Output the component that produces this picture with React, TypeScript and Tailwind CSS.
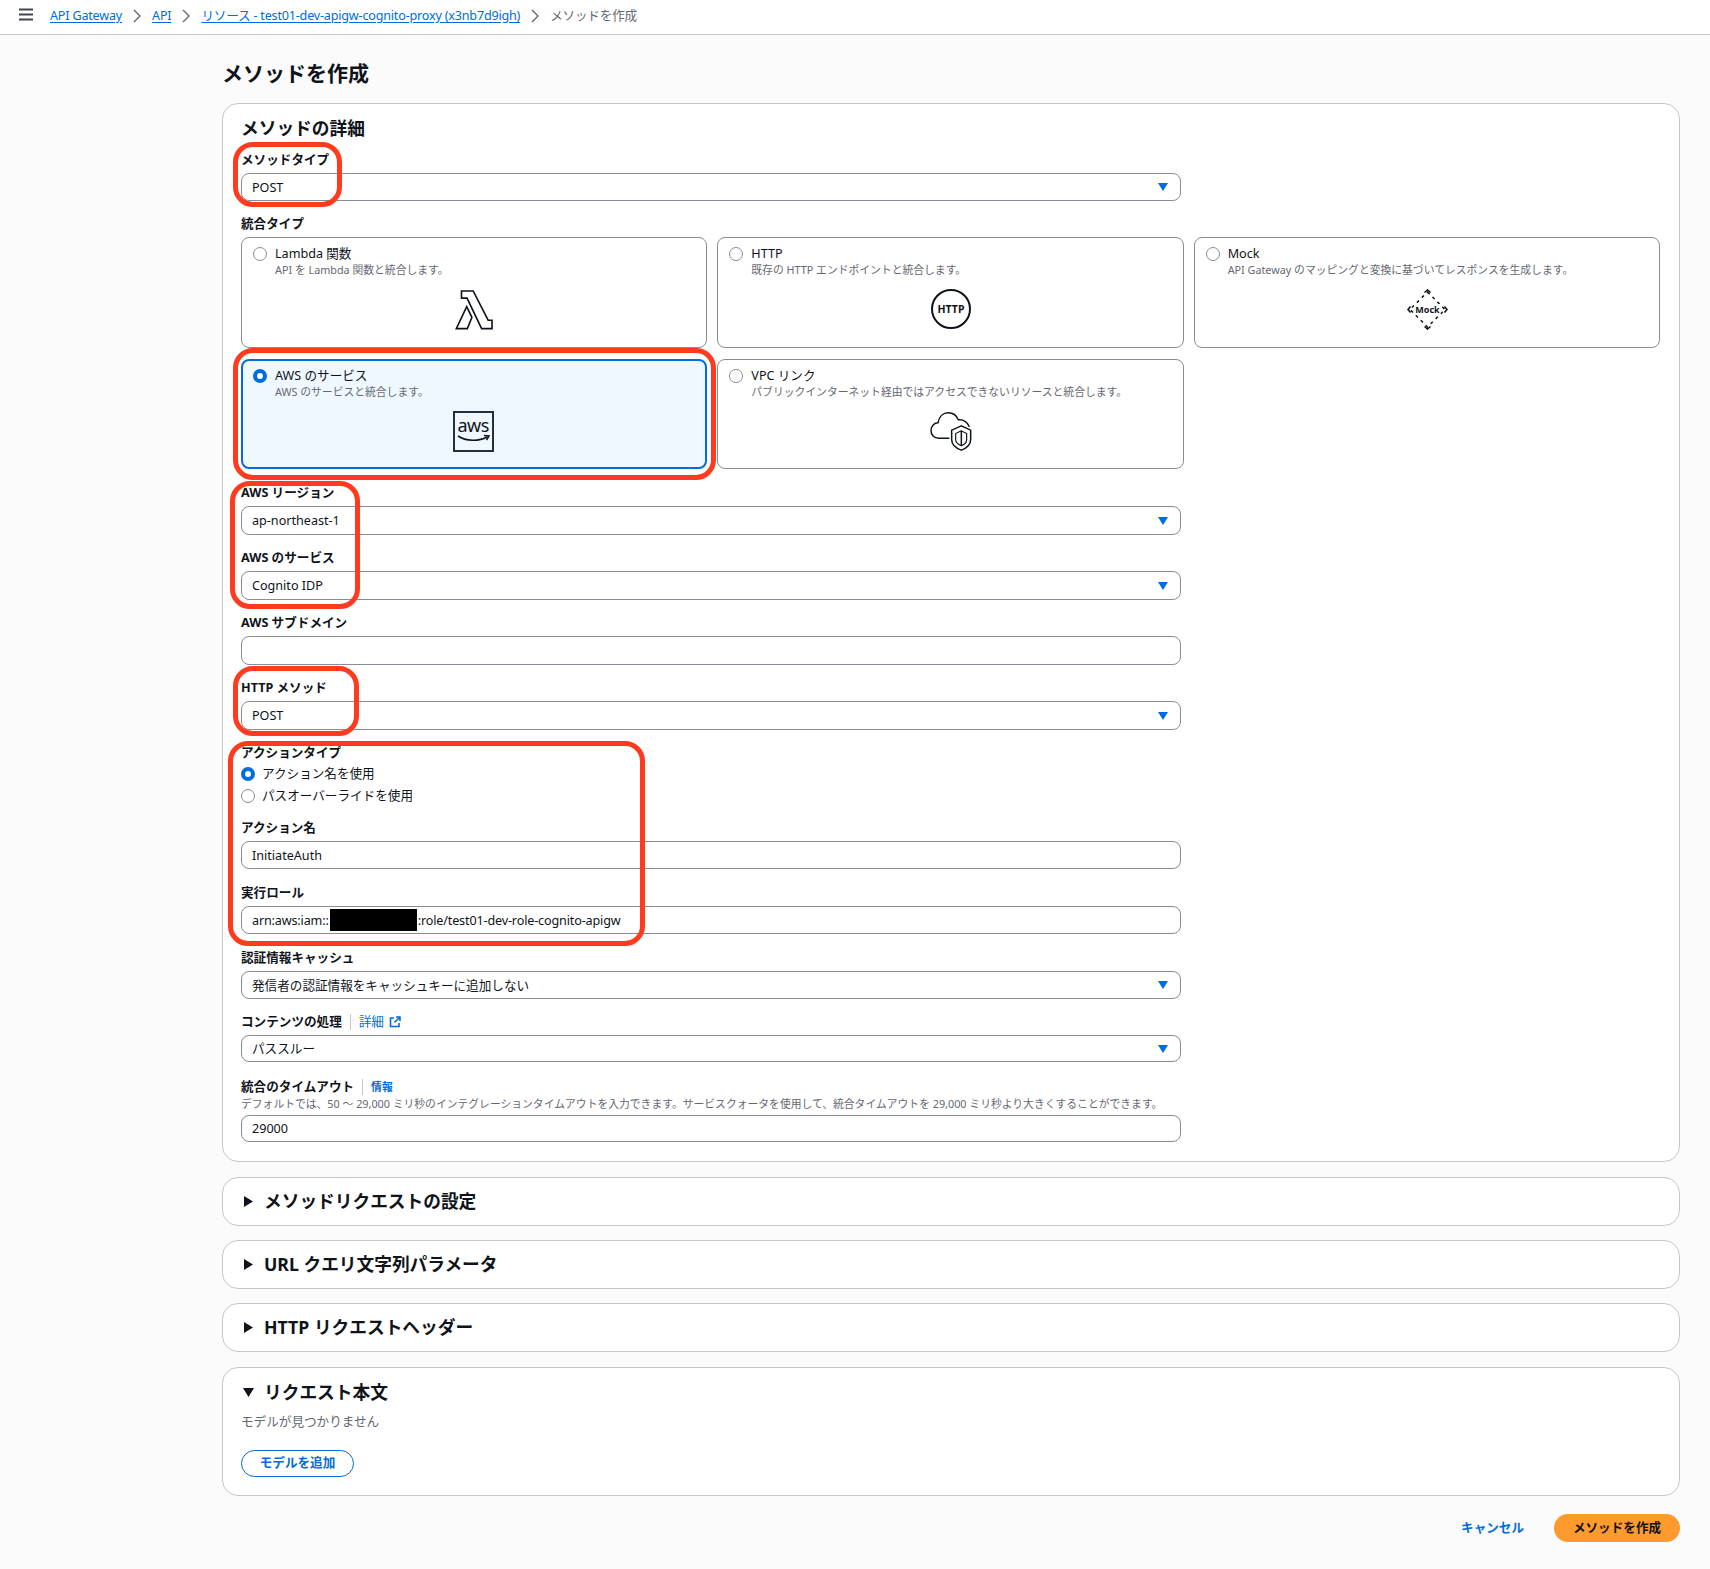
import type { ReactNode } from "react";

const Caret = () => (
  <svg width="10" height="8" viewBox="0 0 10 8" className="shrink-0">
    <polygon points="0,0 10,0 5,8" fill="#006ce0" />
  </svg>
);

const Chevron = () => (
  <svg width="8" height="14" viewBox="0 0 8 14" className="mx-[11px] shrink-0">
    <path d="M1 1l6 6-6 6" fill="none" stroke="#656871" strokeWidth="1.4" />
  </svg>
);

function Radio({ checked = false }: { checked?: boolean }) {
  return checked ? (
    <span className="box-border block h-[14px] w-[14px] shrink-0 rounded-full border-[4px] border-[#006ce0] bg-white" />
  ) : (
    <span className="box-border block h-[14px] w-[14px] shrink-0 rounded-full border border-[#8c8c94] bg-white" />
  );
}

function Label({ children }: { children: ReactNode }) {
  return <div className="h-[22px] text-[12.6px] leading-[23px] font-bold text-[#0f141a]">{children}</div>;
}

function Field({
  label,
  value,
  className,
  height,
  select = false,
}: {
  label?: ReactNode;
  value: ReactNode;
  className: string;
  height: string;
  select?: boolean;
}) {
  return (
    <div className={className}>
      {label && <div className="mb-[3px]"><Label>{label}</Label></div>}
      <div
        className={`${height} flex w-[940px] items-center justify-between rounded-lg border border-[#8c8c94] bg-white pr-[12px] pl-[10px] text-[12.6px] text-[#0f141a]`}
      >
        <span className="flex items-center pt-[2px]">{value}</span>
        {select && <Caret />}
      </div>
    </div>
  );
}

function LambdaIcon() {
  return (
    <svg width="38" height="41" viewBox="703 206 117 124" className="ml-[-2px]">
      <path d="M723 211H759L805 301H817V327H785L740 233H723Z" fill="none" stroke="#0f141a" strokeWidth="5" strokeLinejoin="miter" />
      <path d="M739 259L707 327H741L755 292Z" fill="none" stroke="#0f141a" strokeWidth="5" />
    </svg>
  );
}

function AwsIcon() {
  return (
    <div className="ml-[-2px] box-border flex h-[41px] w-[41px] flex-col items-center border-2 border-[#232f3e] bg-transparent">
      <span className="mt-[2px] h-[20px] text-[18px] leading-[20px] tracking-[-0.5px] text-[#0f141a]">aws</span>
      <svg width="33" height="9" viewBox="0 0 33 9" className="mt-[-1px]">
        <path d="M1 2C9 7.5 22 7.5 30 3" fill="none" stroke="#0f141a" strokeWidth="1.7" />
        <path d="M27 1.5L32 2L29.5 6" fill="none" stroke="#0f141a" strokeWidth="1.5" />
      </svg>
    </div>
  );
}

function HttpIcon() {
  return (
    <div className="box-border flex h-[40px] w-[40px] items-center justify-center rounded-full border-2 border-[#0f141a] pt-[1px] text-[10.5px] font-bold text-[#0f141a]">
      HTTP
    </div>
  );
}

function MockIcon() {
  return (
    <svg width="41" height="41" viewBox="0 0 41 41">
      <path d="M20.5 3L38 20.5L20.5 38L3 20.5Z" fill="none" stroke="#0f141a" strokeWidth="1.5" strokeDasharray="3 4" />
      <path d="M17.5 3.5L20.5 1L23.5 3.5M17.5 37.5L20.5 40L23.5 37.5M3.5 17.5L1 20.5L3.5 23.5M37.5 17.5L40 20.5L37.5 23.5" fill="none" stroke="#0f141a" strokeWidth="1.6" />
      <rect x="7.5" y="15" width="26" height="11" fill="#fff" />
      <text x="20.5" y="24" textAnchor="middle" fontSize="9" fontWeight="700" fill="#0f141a">
        Mock
      </text>
    </svg>
  );
}

function VpcIcon() {
  return (
    <svg width="42" height="41" viewBox="690 574 126 120">
      <path
        d="M748 654H716C702 654 693 644 693 631C693 617 703 608 714 608C717 590 729 578 745 578C759 578 770 587 775 599C790 597 803 606 808 620"
        fill="none"
        stroke="#0f141a"
        strokeWidth="4.5"
      />
      <path d="M784 617L755 630V658C755 672 768 684 784 690C800 684 812 672 812 658V630Z" fill="#fff" stroke="#0f141a" strokeWidth="4.5" />
      <path d="M784 632L767 640V658C767 666 775 673 784 677C793 673 800 666 800 658V640Z" fill="none" stroke="#0f141a" strokeWidth="3.5" />
      <path d="M784 632V677" stroke="#0f141a" strokeWidth="4.5" />
    </svg>
  );
}

const integrations = [
  { title: "Lambda 関数", desc: "API を Lambda 関数と統合します。", icon: <LambdaIcon /> },
  { title: "HTTP", desc: "既存の HTTP エンドポイントと統合します。", icon: <HttpIcon /> },
  { title: "Mock", desc: "API Gateway のマッピングと変換に基づいてレスポンスを生成します。", icon: <MockIcon /> },
  { title: "AWS のサービス", desc: "AWS のサービスと統合します。", icon: <AwsIcon />, selected: true },
  { title: "VPC リンク", desc: "パブリックインターネット経由ではアクセスできないリソースと統合します。", icon: <VpcIcon /> },
];

function Collapsed({ title, className }: { title: string; className: string }) {
  return (
    <div className={`${className} flex h-[49px] items-center rounded-2xl border border-[#c6c6cd] bg-white pl-[21px]`}>
      <svg width="9" height="11" viewBox="0 0 9 11" className="mr-[11px]">
        <polygon points="0,0 9,5.5 0,11" fill="#0f141a" />
      </svg>
      <span className="text-[17.7px] font-bold text-[#0f141a]">{title}</span>
    </div>
  );
}

export default function App() {
  return (
    <div className="relative h-[1569px] w-[1710px] overflow-hidden bg-[#fbfbfb] [font-family:'Noto_Sans','Noto_Sans_CJK_JP',sans-serif]">
      <header className="flex h-[35px] items-center border-b border-[#c6c6cd] bg-white pb-[5px] pl-[19px] text-[12.6px] tracking-[-0.2px]">
        <svg width="14" height="13" viewBox="0 0 14 13" className="mr-[17px]">
          <path d="M0 1.5H14M0 6.5H14M0 11.5H14" stroke="#424650" strokeWidth="1.8" />
        </svg>
        <div className="flex items-center pt-[3px]">
          <a className="text-[#006ce0] underline underline-offset-2">API Gateway</a>
          <Chevron />
          <a className="text-[#006ce0] underline underline-offset-2">API</a>
          <Chevron />
          <a className="text-[#006ce0] underline underline-offset-2">リソース - test01-dev-apigw-cognito-proxy (x3nb7d9igh)</a>
          <Chevron />
          <span className="text-[#656871]">メソッドを作成</span>
        </div>
      </header>

      <main className="ml-[222px] w-[1458px]">
        <h1 className="mt-[21px] h-[34px] text-[21px] leading-[34px] font-bold text-[#0f141a]">メソッドを作成</h1>

        <section className="mt-[13px] h-[1059px] rounded-2xl border border-[#c6c6cd] bg-white px-[18px] pt-[10px]">
          <h2 className="h-[28px] text-[17.7px] leading-[28px] font-bold text-[#0f141a]">メソッドの詳細</h2>

          <Field className="mt-[6px]" height="h-[28px]" label="メソッドタイプ" value="POST" select />

          <div className="mt-[11px] mb-[3px]">
            <Label>統合タイプ</Label>
          </div>
          <div className="grid w-[1419px] grid-cols-3 grid-rows-[111px_110px] gap-x-[10px] gap-y-[11px]">
            {integrations.map((item) => (
              <div
                key={item.title}
                className={
                  item.selected
                    ? "box-border h-full rounded-lg border-2 border-[#006ce0] bg-[#f0f8ff] pt-[8px] pl-[10px]"
                    : "box-border h-full rounded-lg border border-[#8c8c94] bg-white pt-[9px] pl-[11px]"
                }
              >
                <div className="flex items-start gap-[8px]">
                  <Radio checked={item.selected} />
                  <div>
                    <div className="text-[12.6px] leading-[14px] text-[#0f141a]">{item.title}</div>
                    <div className="mt-[2px] text-[10.8px] leading-[14px] text-[#656871]">{item.desc}</div>
                  </div>
                </div>
                <div className="mt-[12px] flex justify-center pr-[10px]">{item.icon}</div>
              </div>
            ))}
          </div>

          <Field className="mt-[12px]" height="h-[29px]" label="AWS リージョン" value="ap-northeast-1" select />
          <Field className="mt-[11px]" height="h-[29px]" label="AWS のサービス" value="Cognito IDP" select />
          <Field className="mt-[11px]" height="h-[29px]" label="AWS サブドメイン" value="" />
          <Field className="mt-[11px]" height="h-[29px]" label="HTTP メソッド" value="POST" select />

          <div className="mt-[11px]">
            <Label>アクションタイプ</Label>
            <div className="flex h-[22px] items-center gap-[7px] text-[12.6px] text-[#0f141a]">
              <Radio checked />
              アクション名を使用
            </div>
            <div className="flex h-[22px] items-center gap-[7px] text-[12.6px] text-[#0f141a]">
              <Radio />
              パスオーバーライドを使用
            </div>
          </div>

          <Field className="mt-[9px]" height="h-[28px]" label="アクション名" value="InitiateAuth" />
          <Field
            className="mt-[12px]"
            height="h-[28px]"
            label="実行ロール"
            value={
              <span className="flex items-center tracking-[-0.15px]">
                arn:aws:iam::
                <span className="mx-[1px] mt-[-2px] block h-[22px] w-[87px] bg-black" />
                :role/test01-dev-role-cognito-apigw
              </span>
            }
          />
          <Field className="mt-[12px]" height="h-[28px]" label="認証情報キャッシュ" value="発信者の認証情報をキャッシュキーに追加しない" select />
          <Field
            className="mt-[11px]"
            height="h-[27px]"
            label={
              <span className="flex items-center">
                コンテンツの処理
                <span className="mx-[8px] h-[16px] w-px bg-[#c6c6cd]" />
                <a className="font-normal text-[#006ce0]">詳細</a>
                <svg width="12" height="12" viewBox="0 0 12 12" className="ml-[5px]">
                  <path d="M5 2H1.5V10.5H10V7M7 1H11V5M11 1L5.5 6.5" fill="none" stroke="#006ce0" strokeWidth="1.6" />
                </svg>
              </span>
            }
            value="パススルー"
            select
          />
          <div className="mt-[13px]">
            <Label>
              <span className="flex items-center">
                統合のタイムアウト
                <span className="mx-[8px] h-[16px] w-px bg-[#c6c6cd]" />
                <a className="text-[10.8px] text-[#006ce0]">情報</a>
              </span>
            </Label>
            <div className="h-[14px] text-[10.8px] leading-[14px] text-[#656871]">
              デフォルトでは、50 ～ 29,000 ミリ秒のインテグレーションタイムアウトを入力できます。サービスクォータを使用して、統合タイムアウトを 29,000 ミリ秒より大きくすることができます。
            </div>
          </div>
          <Field className="mt-[4px]" height="h-[27px]" value="29000" />
        </section>

        <Collapsed className="mt-[15px]" title="メソッドリクエストの設定" />
        <Collapsed className="mt-[14px]" title="URL クエリ文字列パラメータ" />
        <Collapsed className="mt-[14px]" title="HTTP リクエストヘッダー" />

        <section className="mt-[15px] h-[129px] rounded-2xl border border-[#c6c6cd] bg-white pt-[11px] pl-[18px]">
          <div className="flex h-[26px] items-center">
            <svg width="11" height="9" viewBox="0 0 11 9" className="mr-[10px] ml-[2px]">
              <polygon points="0,0 11,0 5.5,9" fill="#0f141a" />
            </svg>
            <span className="text-[17.7px] font-bold text-[#0f141a]">リクエスト本文</span>
          </div>
          <div className="mt-[8px] text-[12.6px] leading-[18px] text-[#656871]">モデルが見つかりません</div>
          <button className="mt-[19px] flex h-[27px] w-[113px] items-center justify-center rounded-full border border-[#006ce0] text-[12.6px] font-bold text-[#006ce0]">
            モデルを追加
          </button>
        </section>

        <div className="mt-[18px] flex items-center justify-end">
          <a className="mr-[30px] text-[12.6px] font-bold text-[#006ce0]">キャンセル</a>
          <button className="h-[28px] w-[126px] rounded-full bg-[#ff9a2e] text-[12.6px] font-bold text-[#0f141a]">メソッドを作成</button>
        </div>
      </main>

      {/* annotation marks drawn over the screenshot */}
      <div className="pointer-events-none absolute top-[142px] left-[233px] h-[65px] w-[109px] rounded-[20px] border-[5px] border-[#ff3b1f]" />
      <div className="pointer-events-none absolute top-[348px] left-[233px] h-[132px] w-[483px] rounded-[20px] border-[5px] border-[#ff3b1f]" />
      <div className="pointer-events-none absolute top-[481px] left-[230px] h-[128px] w-[130px] rounded-[20px] border-[5px] border-[#ff3b1f]" />
      <div className="pointer-events-none absolute top-[666px] left-[233px] h-[70px] w-[126px] rounded-[20px] border-[5px] border-[#ff3b1f]" />
      <div className="pointer-events-none absolute top-[741px] left-[228px] h-[205px] w-[417px] rounded-[20px] border-[5px] border-[#ff3b1f]" />
    </div>
  );
}
